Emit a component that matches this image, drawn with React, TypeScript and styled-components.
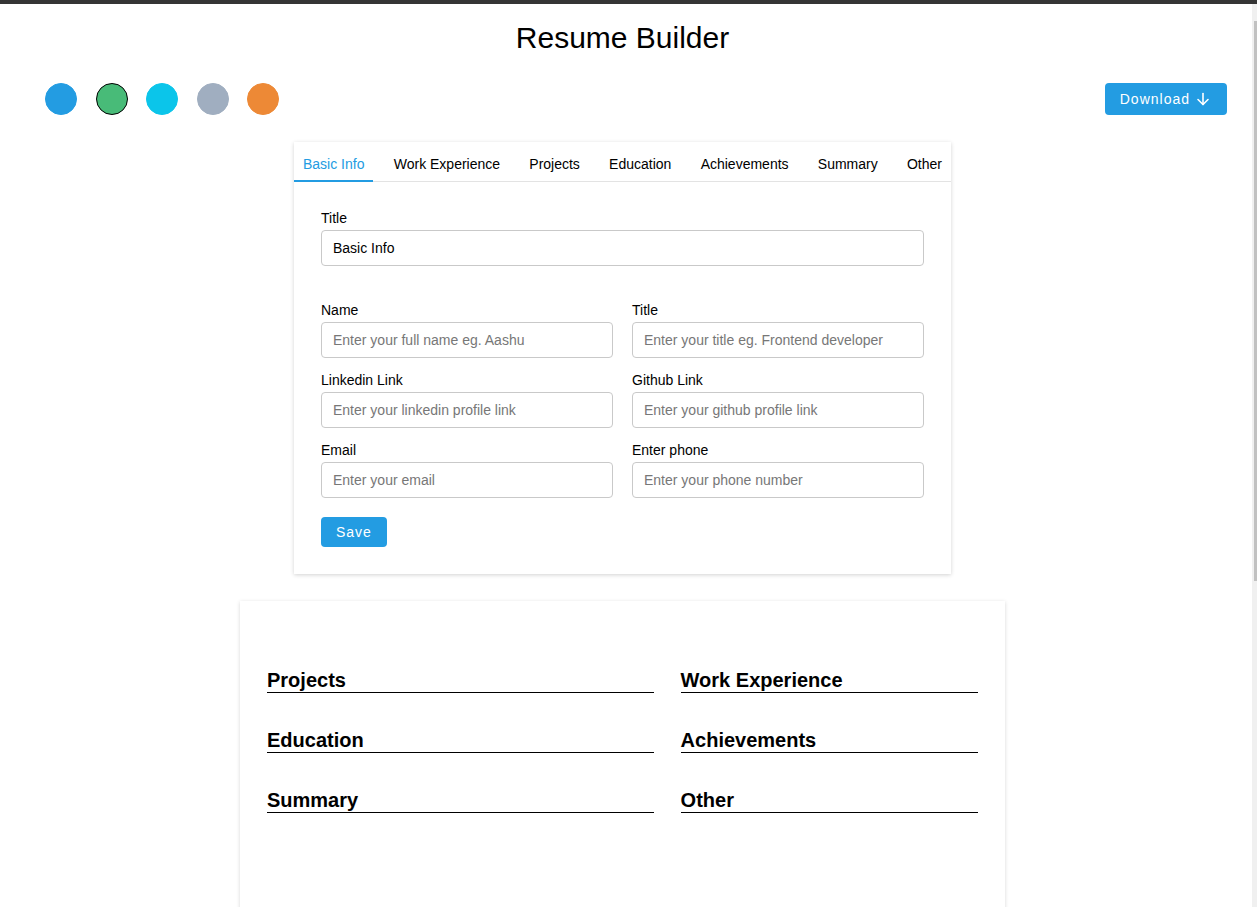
import React, { useState } from "react";
import styled, { createGlobalStyle } from "styled-components";

const GlobalStyle = createGlobalStyle`
  html, body { margin: 0; padding: 0; height: 100%; overflow: hidden; }
  body { font-family: "Liberation Sans", Arial, sans-serif; color: #000; background: #fff; }
  * { box-sizing: border-box; }
`;

const Shell = styled.div`
  display: flex;
  flex-direction: column;
  height: 100vh;
`;

const TopBar = styled.div`
  height: 4px;
  flex: none;
  background: #353535;
`;

const Body = styled.div`
  flex: 1;
  min-height: 0;
  display: flex;
`;

const Scroller = styled.div`
  flex: 1;
  overflow-y: auto;
  scrollbar-width: none;
  padding-right: 7px;
  &::-webkit-scrollbar { display: none; }
`;

const ScrollTrack = styled.div`
  width: 5px;
  flex: none;
  background: #f0f0f0;
  padding: 17px 0 0 2px;
`;

const ScrollThumb = styled.div`
  height: 560px;
  background: #c1c1c1;
`;

const Page = styled.div`
  display: flex;
  flex-direction: column;
  align-items: center;
  padding-bottom: 40px;
`;

const Heading = styled.h1`
  margin: 17px 0 0;
  font-size: 30px;
  line-height: 34px;
  font-weight: 400;
`;

const HeaderRow = styled.div`
  align-self: stretch;
  display: flex;
  justify-content: space-between;
  align-items: center;
  margin-top: 28px;
  padding: 0 18px 0 45px;
`;

const Swatches = styled.div`
  display: flex;
  gap: 18.5px;
`;

const Swatch = styled.button<{ $color: string; $active?: boolean }>`
  width: 32px;
  height: 32px;
  border-radius: 50%;
  padding: 0;
  cursor: pointer;
  background: ${(p) => p.$color};
  border: 1px solid ${(p) => (p.$active ? "#000" : p.$color)};
`;

const PrimaryButton = styled.button<{ $h?: number }>`
  display: inline-flex;
  align-items: center;
  height: ${(p) => p.$h ?? 32}px;
  padding: 0 15px;
  border: none;
  border-radius: 4px;
  background: #239ce2;
  color: #fff;
  font-family: "Liberation Sans", Arial, sans-serif;
  font-size: 14px;
  letter-spacing: 1px;
  cursor: pointer;
`;

const DownloadButton = styled(PrimaryButton)`
  padding: 0 17px 0 15px;
  svg { margin-left: 6px; }
`;

const Card = styled.div`
  width: 657px;
  margin-top: 27px;
  background: #fff;
  box-shadow: 0 1px 4px rgba(0, 0, 0, 0.18);
`;

const Tabs = styled.div`
  display: flex;
  justify-content: space-between;
  border-bottom: 1px solid #e3e3e3;
`;

const Tab = styled.div<{ $active?: boolean }>`
  padding: 14px 9px 8px;
  margin-bottom: -1px;
  font-size: 14px;
  line-height: 16px;
  white-space: nowrap;
  cursor: pointer;
  color: ${(p) => (p.$active ? "#239ce2" : "#000")};
  border-bottom: 2px solid ${(p) => (p.$active ? "#239ce2" : "transparent")};
`;

const FormBody = styled.div`
  display: flex;
  flex-direction: column;
  padding: 28px 27px 27px;
`;

const Field = styled.label`
  display: flex;
  flex-direction: column;
  gap: 4px;
  font-size: 14px;
  line-height: 16px;
`;

const Input = styled.input`
  height: 36px;
  width: 100%;
  padding: 0 11px;
  border: 1px solid #c9c9c9;
  border-radius: 4px;
  font-family: "Liberation Sans", Arial, sans-serif;
  font-size: 14px;
  color: #000;
  outline: none;
  &::placeholder { color: #777; }
`;

const Grid = styled.div`
  display: grid;
  grid-template-columns: 1fr 1fr;
  column-gap: 19px;
  row-gap: 14px;
  margin-top: 36px;
`;

const SaveRow = styled.div`
  margin-top: 19px;
`;

const Paper = styled.div`
  width: 765px;
  min-height: 1080px;
  margin-top: 27px;
  padding: 68px 27px 27px;
  background: #fff;
  box-shadow: 0 1px 4px rgba(0, 0, 0, 0.16);
  display: grid;
  grid-template-columns: 1.3fr 1fr;
  column-gap: 27px;
  align-items: start;
`;

const Column = styled.div`
  display: flex;
  flex-direction: column;
  gap: 36px;
`;

const SectionTitle = styled.h3`
  margin: 0;
  font-size: 20px;
  line-height: 23px;
  font-weight: 700;
  border-bottom: 1px solid #000;
`;

const ArrowDown = () => (
  <svg width="14" height="14" viewBox="0 0 14 14" fill="none" stroke="#fff" strokeWidth="1.6" strokeLinecap="round" strokeLinejoin="round">
    <path d="M7 1.5v11" />
    <path d="M2 7.5l5 5 5-5" />
  </svg>
);

const colors = ["#239ce2", "#48bb78", "#0bc5ea", "#a0aec0", "#ed8936"];
const tabs = ["Basic Info", "Work Experience", "Projects", "Education", "Achievements", "Summary", "Other"];

export default function App() {
  const [active, setActive] = useState(1);
  const [tab, setTab] = useState(0);
  return (
    <Shell>
      <GlobalStyle />
      <TopBar />
      <Body>
        <Scroller>
          <Page>
            <Heading>Resume Builder</Heading>
            <HeaderRow>
              <Swatches>
                {colors.map((c, i) => (
                  <Swatch key={c} $color={c} $active={i === active} onClick={() => setActive(i)} />
                ))}
              </Swatches>
              <DownloadButton>
                Download
                <ArrowDown />
              </DownloadButton>
            </HeaderRow>

            <Card>
              <Tabs>
                {tabs.map((t, i) => (
                  <Tab key={t} $active={i === tab} onClick={() => setTab(i)}>
                    {t}
                  </Tab>
                ))}
              </Tabs>
              <FormBody>
                <Field>
                  Title
                  <Input defaultValue="Basic Info" />
                </Field>
                <Grid>
                  <Field>
                    Name
                    <Input placeholder="Enter your full name eg. Aashu" />
                  </Field>
                  <Field>
                    Title
                    <Input placeholder="Enter your title eg. Frontend developer" />
                  </Field>
                  <Field>
                    Linkedin Link
                    <Input placeholder="Enter your linkedin profile link" />
                  </Field>
                  <Field>
                    Github Link
                    <Input placeholder="Enter your github profile link" />
                  </Field>
                  <Field>
                    Email
                    <Input placeholder="Enter your email" />
                  </Field>
                  <Field>
                    Enter phone
                    <Input placeholder="Enter your phone number" />
                  </Field>
                </Grid>
                <SaveRow>
                  <PrimaryButton $h={30}>Save</PrimaryButton>
                </SaveRow>
              </FormBody>
            </Card>

            <Paper>
              <Column>
                <SectionTitle>Projects</SectionTitle>
                <SectionTitle>Education</SectionTitle>
                <SectionTitle>Summary</SectionTitle>
              </Column>
              <Column>
                <SectionTitle>Work Experience</SectionTitle>
                <SectionTitle>Achievements</SectionTitle>
                <SectionTitle>Other</SectionTitle>
              </Column>
            </Paper>
          </Page>
        </Scroller>
        <ScrollTrack>
          <ScrollThumb />
        </ScrollTrack>
      </Body>
    </Shell>
  );
}
